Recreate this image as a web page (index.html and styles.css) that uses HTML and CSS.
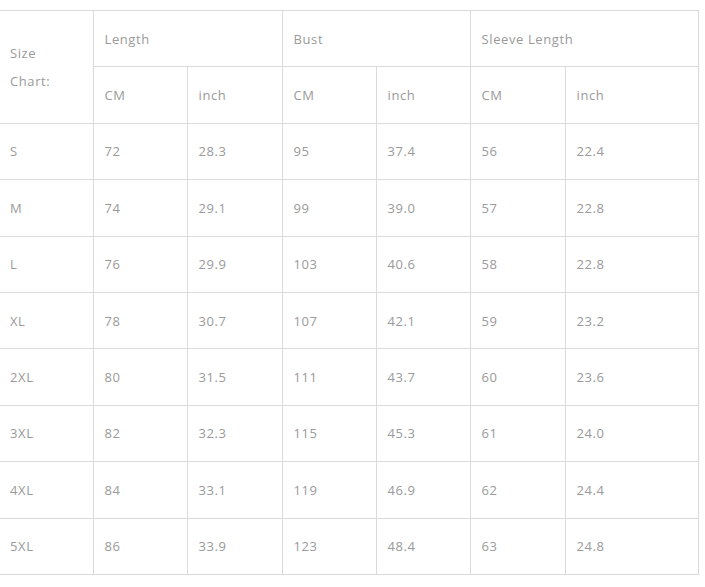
FILE: index.html
```html
<!DOCTYPE html>
<html>
<head>
<meta charset="utf-8">
<link rel="stylesheet" href="styles.css">
</head>
<body>
<table class="chart">
  <colgroup>
    <col class="c1"><col class="c2"><col class="c3"><col class="c4"><col class="c5"><col class="c6"><col class="c7">
  </colgroup>
  <thead>
    <tr>
      <th rowspan="2" class="first size-label">Size<br>Chart:</th>
      <th colspan="2">Length</th>
      <th colspan="2">Bust</th>
      <th colspan="2" class="last">Sleeve Length</th>
    </tr>
    <tr>
      <th>CM</th><th>inch</th><th>CM</th><th>inch</th><th>CM</th><th class="last">inch</th>
    </tr>
  </thead>
  <tbody>
    <tr><td class="first">S</td><td>72</td><td>28.3</td><td>95</td><td>37.4</td><td>56</td><td class="last">22.4</td></tr>
    <tr><td class="first">M</td><td>74</td><td>29.1</td><td>99</td><td>39.0</td><td>57</td><td class="last">22.8</td></tr>
    <tr><td class="first">L</td><td>76</td><td>29.9</td><td>103</td><td>40.6</td><td>58</td><td class="last">22.8</td></tr>
    <tr><td class="first">XL</td><td>78</td><td>30.7</td><td>107</td><td>42.1</td><td>59</td><td class="last">23.2</td></tr>
    <tr><td class="first">2XL</td><td>80</td><td>31.5</td><td>111</td><td>43.7</td><td>60</td><td class="last">23.6</td></tr>
    <tr><td class="first">3XL</td><td>82</td><td>32.3</td><td>115</td><td>45.3</td><td>61</td><td class="last">24.0</td></tr>
    <tr><td class="first">4XL</td><td>84</td><td>33.1</td><td>119</td><td>46.9</td><td>62</td><td class="last">24.4</td></tr>
    <tr><td class="first">5XL</td><td>86</td><td>33.9</td><td>123</td><td>48.4</td><td>63</td><td class="last">24.8</td></tr>
  </tbody>
</table>
</body>
</html>
```
FILE: styles.css
```css
html, body {
  margin: 0;
  padding: 0;
  background: #ffffff;
}
body {
  padding-top: 10px;
}
.chart {
  border-collapse: collapse;
  table-layout: fixed;
  width: 698px;
  font-family: "Open Sans", "Noto Sans", sans-serif;
  font-size: 13px;
  color: #9a9a9a;
  letter-spacing: 0.6px;
}
.c1 { width: 93px; }
.c2 { width: 94px; }
.c3 { width: 95px; }
.c4 { width: 94px; }
.c5 { width: 94px; }
.c6 { width: 95px; }
.c7 { width: 133px; }
.chart tr {
  height: 56.4px;
}
.chart th,
.chart td {
  border: 1px solid #dadada;
  padding: 0 0 0 11px;
  text-align: left;
  vertical-align: middle;
  font-weight: normal;
}
.chart .first {
  border-left: none;
  padding-left: 10px;
}
.size-label {
  line-height: 28px;
}
```
